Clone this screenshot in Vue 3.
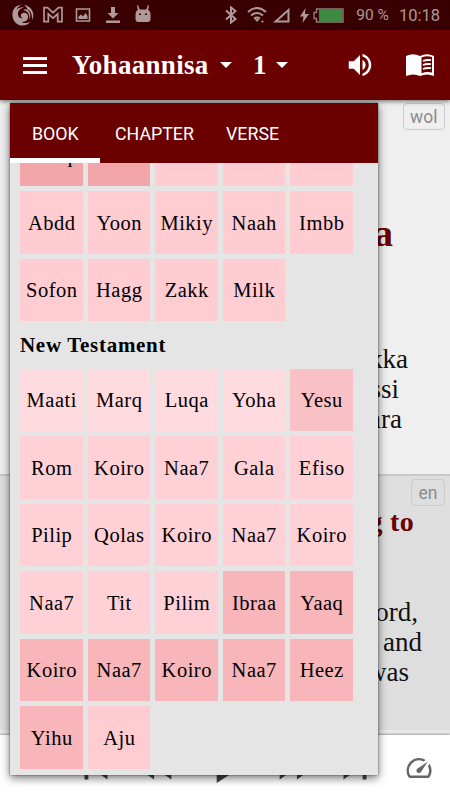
<script setup>
import { ref } from 'vue'

const tabs   = ['BOOK', 'CHAPTER', 'VERSE']
const active = ref('BOOK')

const oldBooks = [
  { name: 'Hizq',  group: 'major' },
  { name: '',      group: 'major' },
  { name: '',      group: 'minor' },
  { name: '',      group: 'minor' },
  { name: '',      group: 'minor' },
  ...['Abdd', 'Yoon', 'Mikiy', 'Naah', 'Imbb', 'Sofon', 'Hagg', 'Zakk', 'Milk']
    .map(name => ({ name, group: 'minor' })),
]

const newBooks = [
  ...['Maati', 'Marq', 'Luqa', 'Yoha'].map(name => ({ name, group: 'gospel' })),
  { name: 'Yesu', group: 'acts' },
  ...['Rom', 'Koiro', 'Naa7', 'Gala', 'Efiso', 'Pilip', 'Qolas', 'Koiro', 'Naa7', 'Koiro', 'Naa7', 'Tit', 'Pilim']
    .map(name => ({ name, group: 'paul' })),
  ...['Ibraa', 'Yaaq', 'Koiro', 'Naa7', 'Koiro', 'Naa7', 'Heez', 'Yihu']
    .map(name => ({ name, group: 'general' })),
  { name: 'Aju', group: 'minor' },
]
</script>

<template>
  <div class="app">
    <!-- status bar -->
    <div class="status">
      <div class="status-left">
        <svg width="22" height="22" viewBox="0 0 22 22" fill="currentColor">
          <path d="M10 .5C3 1 0 6 .5 12c.5 5 4 9 9 9.500 4 .3 7-1 9-4-3 2-7 2-9 .5 5 0 7-3 6.500-6-.5-3-4-4-6-2.500-2 1.500-1.500 4 1 4.500-3 1-5-1-5-4C6 6 9 4 12 3.500 9 3 6 4 4.500 6 5.500 3 7.500 1.500 10 .5z" />
          <path d="M12 1c5 .5 9 4.500 9.300 9.500.1 2-.5 4-1.300 5.500.5-5-1-9-5-11 3 3 4.500 7 2.500 11C18 11 16 7 11 6c2-1 3-1 5 0-1-2-2-4-4-5z" />
        </svg>
        <svg width="22" height="22" viewBox="0 0 22 22" fill="none" stroke="currentColor">
          <path d="M2 3.700h3.500l5.500 5 5.500-5H20v14h-4.300V10L11 14.200 6.300 10v7.700H2z" stroke-width="1.700" />
        </svg>
        <svg width="16" height="16" viewBox="0 0 16 16" fill="none" stroke="currentColor">
          <path d="M1.500 2h13v12h-13z" stroke-width="1.600" />
          <path d="M3.500 12V9.500L6 7.500l2 2 2.500-3.500 2 3v3z" fill="currentColor" stroke="none" />
        </svg>
        <svg width="16" height="18" viewBox="0 0 16 18" fill="currentColor">
          <path d="M6 1h4v6h3.500L8 12.500 2.500 7H6zM1 14.500h14V17H1z" />
        </svg>
        <svg width="16" height="20" viewBox="0 0 16 20" fill="currentColor">
          <path d="M3 1l1.800 4.500h6.400L13 1l1 .4L13.200 6Q15.500 7 15.500 10v5q0 3-3 3h-9q-3 0-3-3v-5Q.500 7 2.800 6L2 1.400zM4 9.500V11h2V9.500zm6 0V11h2V9.500z" fill-rule="evenodd" />
        </svg>
      </div>
      <div class="status-right">
        <svg class="bt" width="14" height="18" viewBox="0 0 14 18" fill="none" stroke="currentColor" stroke-width="2">
          <path d="M2 4.500l9.500 8.500L7 16.500V1.500L11.500 5 2 13.500" />
        </svg>
        <svg class="wifi" width="20" height="18" viewBox="0 0 20 18" fill="none" stroke="currentColor" stroke-width="2">
          <path d="M1 6Q10-2 19 6M4 9.500q6-5 12 0M7 12.500q3-2 6 0" />
          <path d="M7.500 13h5L10 16z" fill="currentColor" stroke="none" />
          <circle cx="15.500" cy="15.500" r="1.100" fill="currentColor" stroke="none" />
        </svg>
        <svg class="cell" width="17" height="15" viewBox="0 0 17 15" fill="none" stroke="currentColor" stroke-width="2">
          <path d="M2.500 13.500h13V2z" />
        </svg>
        <svg class="bolt" width="9" height="15" viewBox="0 0 9 15" fill="currentColor">
          <path d="M5.500 0L0 8.500h3.500L2.500 15 9 6H5z" />
        </svg>
        <svg class="battery" width="31" height="15" viewBox="0 0 31 15">
          <path d="M3.500 1h26.500v13H3.500v-3.500H1v-6h2.500z" fill="none" stroke="#8d8078" stroke-width="1.400" />
          <path d="M6 2h23v11H6z" fill="#3c8b43" />
        </svg>
        <span class="percent">90 %</span>
        <span class="clock">10:18</span>
      </div>
    </div>

    <!-- toolbar -->
    <div class="toolbar">
      <svg class="menu" width="24" height="17" viewBox="0 0 24 17" fill="#fff">
        <path d="M0 0h24v3H0zM0 7h24v3H0zM0 14h24v3H0z" />
      </svg>
      <span class="book">Yohaannisa</span>
      <svg class="caret" width="12" height="6" viewBox="0 0 12 6" fill="#fff"><path d="M0 0h12L6 6z" /></svg>
      <span class="chapter">1</span>
      <svg class="caret" width="12" height="6" viewBox="0 0 12 6" fill="#fff"><path d="M0 0h12L6 6z" /></svg>
      <div class="actions">
        <svg width="30" height="30" viewBox="0 0 24 24" fill="#fff">
          <path d="M3 9v6h4l5 5V4L7 9H3zm13.500 3c0-1.770-1.020-3.290-2.500-4.030v8.050c1.480-.730 2.500-2.250 2.500-4.020zM14 3.230v2.060c2.890.860 5 3.540 5 6.710s-2.110 5.850-5 6.710v2.060c4.010-.910 7-4.490 7-8.770s-2.990-7.860-7-8.770z" />
        </svg>
        <svg width="30" height="24" viewBox="0 0 30 24" fill="#fff">
          <path d="M1 3Q8-.500 15 3 22-.500 29 3v20q-7-3-14 0-7-3-14 0zM16.500 4.500v15.700q5.500-2 10.500-.6V4q-5.500-1.500-10.500.5z" fill-rule="evenodd" />
          <path d="M18 8q3.500-1.500 8-.8M18 12q3.500-1.500 8-.8M18 16q3.500-1.500 8-.8" fill="none" stroke="#fff" stroke-width="1.800" />
        </svg>
      </div>
    </div>

    <!-- reading panes -->
    <div class="pane pane-top">
      <span class="lang">wol</span>
      <div class="title">a</div>
      <div class="verse">
        <div class="l1">kka</div>
        <div class="l2">ssi</div>
        <div class="l3">ara</div>
      </div>
    </div>
    <div class="pane pane-bottom">
      <span class="lang">en</span>
      <div class="heading">g to</div>
      <div class="verse">
        <div class="l4">ord,</div>
        <div class="l5">and</div>
        <div class="l6">was</div>
      </div>
    </div>

    <!-- audio player -->
    <div class="player">
      <svg width="46" height="46" viewBox="0 0 24 24"><path d="M6 6h2v12H6zm3.500 6l8.500 6V6z" /></svg>
      <svg width="46" height="46" viewBox="0 0 24 24"><path d="M11 18V6l-8.500 6 8.500 6zm.5-6l8.500 6V6l-8.500 6z" /></svg>
      <svg class="play" width="53" height="53" viewBox="0 0 24 24"><path d="M8 5v14l11-7z" /></svg>
      <svg width="46" height="46" viewBox="0 0 24 24"><path d="M4 18l8.500-6L4 6v12zm9-12v12l8.500-6L13 6z" /></svg>
      <svg width="46" height="46" viewBox="0 0 24 24"><path d="M6 18l8.500-6L6 6v12zM16 6v12h2V6h-2z" /></svg>
      <svg class="speed" width="30" height="30" viewBox="0 0 24 24">
        <path d="M20.380 8.570l-1.230 1.850a8 8 0 0 1-.220 7.580H5.070A8 8 0 0 1 15.580 6.850l1.850-1.230A10 10 0 0 0 3.350 19a2 2 0 0 0 1.720 1h13.850a2 2 0 0 0 1.740-1 10 10 0 0 0-.270-10.440zM10.590 15.410a2 2 0 0 0 2.830 0l5.660-8.490-8.490 5.660a2 2 0 0 0 0 2.830z" />
      </svg>
    </div>

    <!-- book picker -->
    <div class="picker">
      <div class="tabs">
        <div
          v-for="tab in tabs"
          :key="tab"
          class="tab"
          :class="{ 'tab-active': active === tab }"
          @click="active = tab"
        >{{ tab }}</div>
      </div>
      <div class="list">
        <div class="grid grid-old">
          <div v-for="(b, i) in oldBooks" :key="i" class="cell-book" :class="b.group">{{ b.name }}</div>
        </div>
        <div class="section">New Testament</div>
        <div class="grid">
          <div v-for="(b, i) in newBooks" :key="i" class="cell-book" :class="b.group">{{ b.name }}</div>
        </div>
      </div>
    </div>
  </div>
</template>

<style>
body { background: #fff; }
</style>

<style scoped>
.app {
  position: relative;
  width: 450px;
  height: 800px;
  overflow: hidden;
  display: flex;
  flex-direction: column;
  font-family: 'Liberation Serif', serif;
  color: #111;
}

svg { display: block; flex: none; }

/* ── Status bar ── */
.status {
  height: 30px;
  flex: none;
  display: flex;
  justify-content: space-between;
  align-items: center;
  padding: 0 10px 0 12px;
  background: #380000;
  color: #b09999;
  font-family: Roboto, sans-serif;
  font-size: 16px;
}

.status-left { display: flex; align-items: center; }
.status-left svg:nth-child(2) { margin-left: 8px; }
.status-left svg:nth-child(3) { margin-left: 11px; }
.status-left svg:nth-child(4) { margin-left: 14px; }
.status-left svg:nth-child(5) { margin-left: 14px; margin-bottom: 3px; }

.status-right { display: flex; align-items: center; }
.wifi    { margin-left: 9px; }
.cell    { margin-left: 6px; }
.bolt    { margin-left: 10px; }
.battery { margin-left: 4px; }
.percent { margin-left: 12px; font-size: 15.5px; }
.clock   { margin-left: 10px; font-size: 16.5px; }

/* ── Toolbar ── */
.toolbar {
  height: 70px;
  flex: none;
  display: flex;
  align-items: center;
  padding: 0 15px 0 23px;
  background: #6b0000;
  color: #fff;
  font-size: 27px;
  font-weight: 700;
  box-shadow: 0 1px 5px rgba(0, 0, 0, 0.6);
  z-index: 1;
}

.toolbar .caret { margin-left: 9px; }
.book    { width: 139px; margin-left: 25px; letter-spacing: 0.3px; white-space: nowrap; }
.chapter { width: 14px; margin-left: 21px; }
.actions { display: flex; align-items: center; gap: 30px; margin-left: auto; }

/* ── Reading panes ── */
.pane {
  flex: none;
  display: flex;
  flex-direction: column;
  align-items: flex-end;
  box-sizing: border-box;
}

.pane-top    { height: 376px; padding-top: 3px; background: #efefef; border-bottom: 2px solid #c8c8c8; }
.pane-bottom { height: 259px; padding-top: 3px; background: #dedede; border-bottom: 5px solid #e8e8e8; }

.lang {
  box-sizing: border-box;
  height: 27px;
  margin-right: 5px;
  padding: 0 6.5px;
  border: 1px solid #cbcbcb;
  border-radius: 4px;
  font-family: Roboto, sans-serif;
  font-size: 17.5px;
  line-height: 26px;
  color: #8c8c8c;
}

.title, .heading { color: #6b0000; font-weight: 700; }
.title   { margin: 80px 57px 0 0; font-size: 38px; line-height: 46px; }
.heading { margin: 0 36px 0 0; font-size: 28px; line-height: 32px; letter-spacing: 0.3px; }

.verse { font-size: 27px; line-height: 30px; text-align: right; }
.pane-top .verse    { margin-top: 88px; }
.pane-bottom .verse { margin-top: 59px; }

.l1 { padding-right: 42px; }
.l2 { padding-right: 51px; }
.l3 { padding-right: 48px; }
.l4 { padding-right: 32px; }
.l5 { padding-right: 28px; }
.l6 { padding-right: 41px; }

/* ── Player ── */
.player {
  flex: 1;
  display: flex;
  align-items: center;
  gap: 14px;
  padding-left: 73px;
  background: #fff;
  box-shadow: 0 -1px 2px rgba(0, 0, 0, 0.3);
  fill: #444;
}

.play  { margin: 0 6px; }
.speed { margin-left: 12px; fill: #666; }

/* ── Book picker ── */
.picker {
  position: absolute;
  left: 10px;
  top: 103px;
  width: 367.5px;
  height: 672px;
  z-index: 2;
  display: flex;
  flex-direction: column;
  background: #e5e5e5;
  box-shadow: 0 3px 9px rgba(0, 0, 0, 0.55), 0 0 2px rgba(0, 0, 0, 0.5);
}

.tabs {
  height: 59.5px;
  flex: none;
  display: flex;
  background: #6b0000;
}

.tab {
  box-sizing: border-box;
  padding: 0 15px;
  border-bottom: 5px solid transparent;
  font-family: Roboto, sans-serif;
  font-size: 17.8px;
  line-height: 62px;
  color: #fff;
}

.tab:first-child { width: 90px; padding: 0 0 0 22px; }
.tab:nth-child(2) { width: 111px; }
.tab-active { border-bottom-color: #fff; }

.list { flex: 1; overflow: hidden; padding: 0 10px; color: #000; }

.grid {
  display: grid;
  grid-template-columns: repeat(5, 62.5px);
  grid-auto-rows: 62.5px;
  gap: 5px;
}

.grid-old { margin-top: -39px; }

.cell-book {
  box-sizing: border-box;
  display: flex;
  align-items: center;
  justify-content: center;
  padding: 2px 0 0 1px;
  font-size: 20.5px;
  letter-spacing: 0.5px;
}

.major   { background: #f3a6a9; }
.minor   { background: #ffccd1; }
.gospel  { background: #ffdadf; }
.acts    { background: #f9c1c5; }
.paul    { background: #ffd1d7; }
.general { background: #f8b6bb; }

.section {
  height: 47.5px;
  font-size: 21px;
  font-weight: 700;
  line-height: 48px;
  letter-spacing: 0.7px;
}
</style>
